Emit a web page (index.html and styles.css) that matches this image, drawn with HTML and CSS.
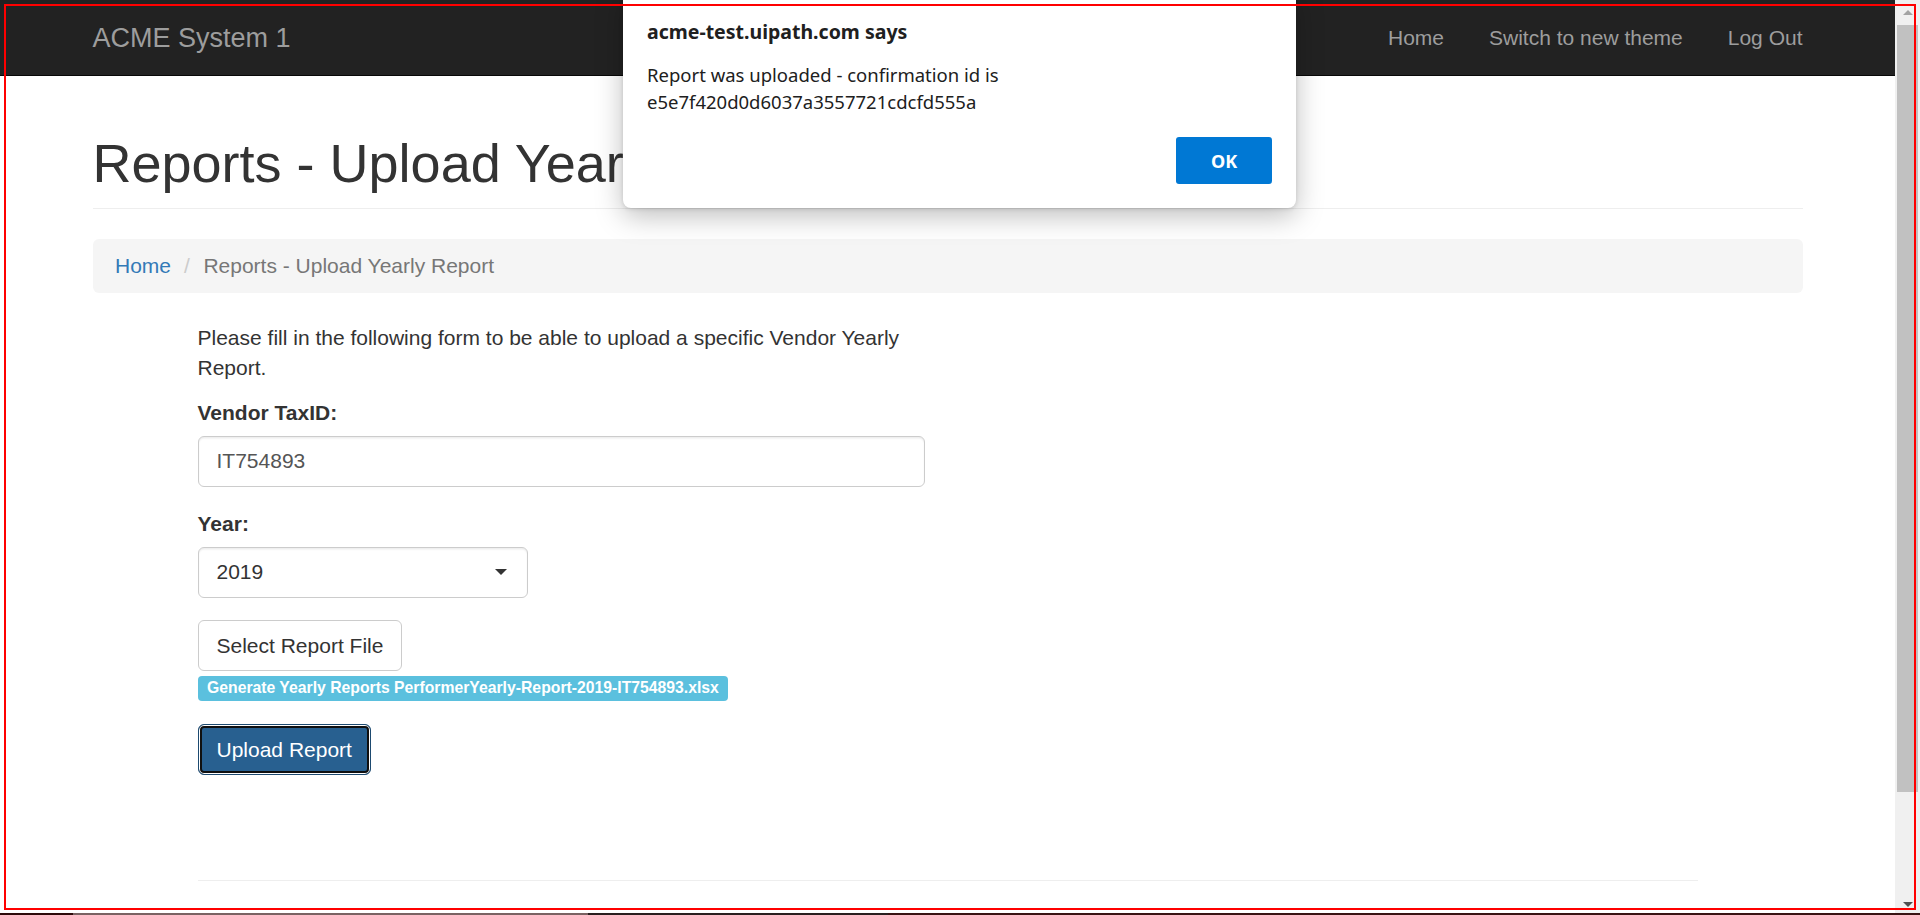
FILE: index.html
```html
<!DOCTYPE html>
<html lang="en">
<head>
<meta charset="utf-8">
<title>ACME System 1 - Reports - Upload Yearly Report</title>
<link rel="stylesheet" href="styles.css">
</head>
<body>
<div class="window">
  <div class="page">
    <nav class="navbar">
      <div class="container nav-inner">
        <a class="brand" href="#">ACME System 1</a>
        <ul class="nav-links">
          <li><a href="#">Home</a></li>
          <li><a href="#">Switch to new theme</a></li>
          <li class="last"><a href="#">Log Out</a></li>
        </ul>
      </div>
    </nav>

    <div class="container">
      <div class="page-header">
        <h1>Reports - Upload Yearly Report</h1>
      </div>
      <ol class="breadcrumb">
        <li><a href="#">Home</a></li>
        <li class="sep">/</li>
        <li class="active">Reports - Upload Yearly Report</li>
      </ol>

      <div class="inner">
        <div class="form-col">
          <p class="intro">Please fill in the following form to be able to upload a specific Vendor Yearly Report.</p>
          <div class="form-group">
            <label class="lbl">Vendor TaxID:</label>
            <div class="input">IT754893</div>
          </div>
          <div class="form-group">
            <label class="lbl">Year:</label>
            <div class="select"><span>2019</span><span class="caret"></span></div>
          </div>
          <div class="file-group">
            <button class="btn btn-default" type="button">Select Report File</button>
            <div class="file-name"><span class="badge">Generate Yearly Reports PerformerYearly-Report-2019-IT754893.xlsx</span></div>
          </div>
          <button class="btn btn-primary" type="button">Upload Report</button>
        </div>
        <hr class="footer-line">
      </div>
    </div>
  </div>
  <div class="scrollbar">
    <div class="sb-btn"><span class="sb-up"></span></div>
    <div class="sb-track"><div class="sb-thumb"></div></div>
    <div class="sb-btn"><span class="sb-down"></span></div>
  </div>
</div>
<div class="taskbar-edge"></div>

<div class="dialog">
  <div class="dlg-title">acme-test.uipath.com says</div>
  <div class="dlg-msg">Report was uploaded - confirmation id is<br>e5e7f420d0d6037a3557721cdcfd555a</div>
  <div class="dlg-actions"><button class="dlg-ok" type="button">OK</button></div>
</div>

<div class="highlight"></div>
</body>
</html>
```

FILE: styles.css
```css
* { box-sizing: border-box; }

html, body {
  margin: 0;
  padding: 0;
  height: 915px;
  overflow: hidden;
  background: #fff;
}

body {
  font-family: "Liberation Sans", Arial, Helvetica, sans-serif;
  font-size: 21px;
  line-height: 30px;
  color: #333;
  position: relative;
}

a { text-decoration: none; }

.window {
  display: flex;
  height: 913px;
}

.page {
  flex: 1;
  overflow: hidden;
  background: #fff;
}

.container {
  width: 1710px;
  margin: 0 auto;
}

/* navbar */
.navbar {
  height: 76px;
  background: #222;
  border-bottom: 1px solid #080808;
}

.nav-inner {
  display: flex;
  justify-content: space-between;
  align-items: flex-start;
}

.brand {
  display: block;
  font-size: 27px;
  line-height: 30px;
  padding: 22.5px 0;
  color: #9d9d9d;
}

.nav-links {
  display: flex;
  list-style: none;
  margin: 0 -22.5px 0 0;
  padding: 0;
}

.nav-links a {
  display: block;
  padding: 22.5px 22.5px;
  line-height: 30px;
  color: #9d9d9d;
}

/* header */
.page-header {
  margin-top: 58px;
  padding-bottom: 15px;
  border-bottom: 1px solid #eee;
}

.page-header h1 {
  margin: 0;
  font-size: 54px;
  line-height: 59px;
  font-weight: 500;
  color: #333;
  white-space: nowrap;
}

/* breadcrumb */
.breadcrumb {
  display: flex;
  list-style: none;
  margin: 30px 0 30px;
  padding: 12px 22.5px;
  height: 54px;
  background: #f5f5f5;
  border-radius: 6px;
}

.breadcrumb a { color: #337ab7; }
.breadcrumb .sep { color: #ccc; padding: 0 13.5px 0 13px; }
.breadcrumb .active { color: #777; }

/* form */
.inner {
  width: 1500px;
  margin: 0 auto;
}

.form-col { width: 727px; }

.intro { margin: 0 0 15px; }

.form-group { margin-bottom: 22.5px; }

.lbl {
  display: block;
  font-weight: bold;
  margin-bottom: 7.5px;
}

.input {
  height: 51px;
  padding: 9.5px 18px;
  border: 1px solid #ccc;
  border-radius: 6px;
  color: #555;
  box-shadow: inset 0 1.5px 1.5px rgba(0, 0, 0, .075);
}

.select {
  width: 330px;
  height: 51px;
  padding: 9.5px 18px;
  border: 1px solid #ccc;
  border-radius: 6px;
  color: #333;
  display: flex;
  justify-content: space-between;
  align-items: center;
  box-shadow: inset 0 1.5px 1.5px rgba(0, 0, 0, .075);
}

.caret {
  width: 0;
  height: 0;
  border-left: 6px solid transparent;
  border-right: 6px solid transparent;
  border-top: 6px solid #333;
  margin-right: 2px;
}

.btn {
  display: inline-block;
  height: 51px;
  padding: 9.5px 18px;
  font-family: inherit;
  font-size: 21px;
  line-height: 30px;
  border-radius: 6px;
  cursor: pointer;
}

.btn-default {
  background: #fff;
  color: #333;
  border: 1px solid #ccc;
}

.file-name {
  margin-top: 5px;
  line-height: 16px;
  height: 26px;
}

.badge {
  display: inline-block;
  background: #5bc0de;
  color: #fff;
  font-weight: bold;
  font-size: 15.75px;
  line-height: 16px;
  padding: 4px 9.5px 5px;
  border-radius: 4px;
  white-space: nowrap;
}

.file-group { margin-bottom: 22px; }

.btn-primary {
  background: #286090;
  color: #fff;
  border: 1.5px solid #1d4a70;
  box-shadow: inset 0 0 0 1px #fff, inset 0 0 0 3px #101010;
}

.footer-line {
  margin: 105px 0 0;
  border: 0;
  border-top: 1.5px solid #eee;
}

/* scrollbar */
.scrollbar {
  width: 25px;
  background: #f0f0f0;
  display: flex;
  flex-direction: column;
}

.sb-btn {
  height: 25px;
  display: flex;
  align-items: center;
  justify-content: center;
}

.sb-up {
  width: 0; height: 0;
  border-left: 5px solid transparent;
  border-right: 5px solid transparent;
  border-bottom: 5px solid #a3a3a3;
  margin-top: -1px;
}

.sb-down {
  width: 0; height: 0;
  border-left: 5px solid transparent;
  border-right: 5px solid transparent;
  border-top: 5px solid #505050;
  margin-top: 8px;
}

.sb-track {
  flex: 1;
  padding: 0 2px;
}

.sb-thumb {
  height: 767px;
  background: #c1c1c1;
}

.taskbar-edge {
  height: 2px;
  background: linear-gradient(to right, #2e0a0a 0, #2e0a0a 73px, #7a6262 73px, #7a6262 588px, #2a1f1f 588px, #2a1f1f 888px, #3a1212 888px);
}

/* alert dialog */
.dialog {
  position: absolute;
  left: 623px;
  top: -10px;
  width: 673px;
  height: 218px;
  background: #fff;
  border-radius: 8px;
  box-shadow: 0 8px 28px rgba(0, 0, 0, .26), 0 1px 4px rgba(0, 0, 0, .12);
  padding: 28px 24px 24px;
  font-family: "Noto Sans", "Open Sans", sans-serif;
  color: #202020;
  display: flex;
  flex-direction: column;
}

.dlg-title {
  font-weight: bold;
  font-size: 19.5px;
  line-height: 28px;
}

.dlg-msg {
  margin-top: 15px;
  font-size: 18.5px;
  line-height: 27px;
}

.dlg-actions {
  margin-top: auto;
  display: flex;
  justify-content: flex-end;
}

.dlg-ok {
  width: 96px;
  height: 47px;
  background: #0078d4;
  color: #fff;
  border: 0;
  border-radius: 3px;
  font-family: "Noto Sans", "Open Sans", sans-serif;
  font-weight: bold;
  font-size: 18px;
}

/* red highlight frame */
.highlight {
  position: absolute;
  left: 4px;
  top: 4px;
  width: 1912px;
  height: 906px;
  border: 2px solid #ff0000;
  pointer-events: none;
}
```
